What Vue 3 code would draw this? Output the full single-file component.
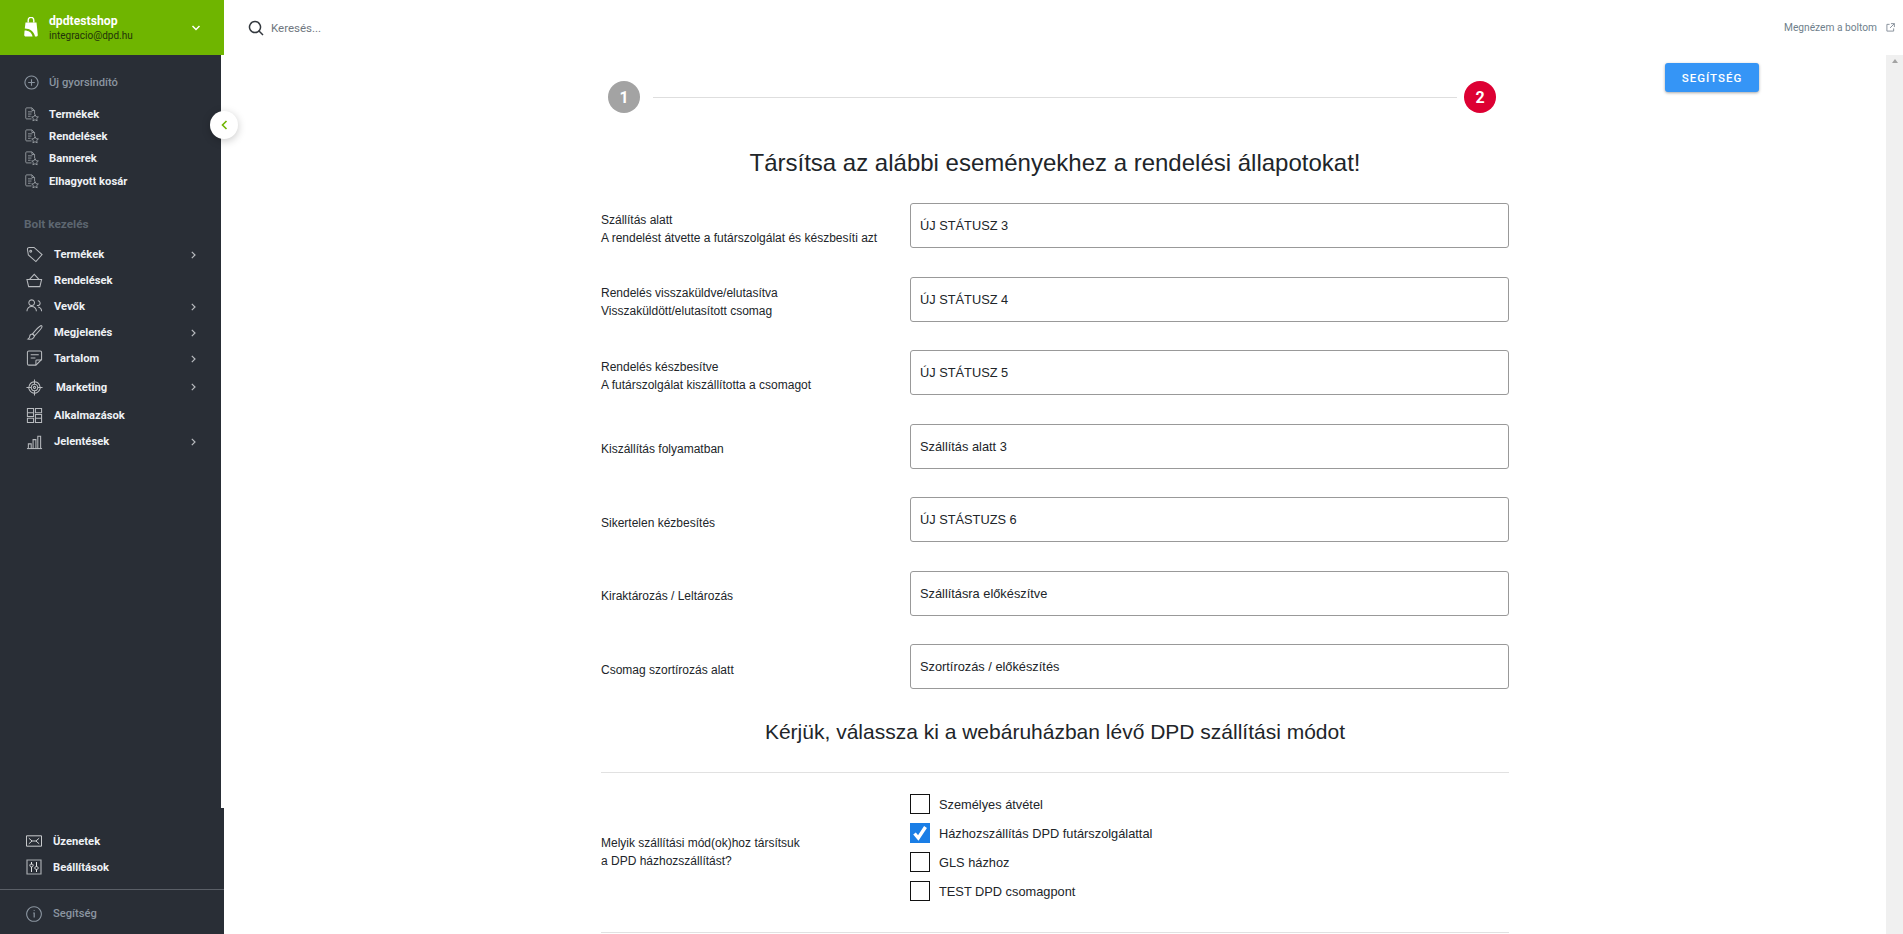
<script setup>
const fileStar = [
  'M8.500 13.500H3a1 1 0 0 1-1-1V2a1 1 0 0 1 1-1h6l3 3v4',
  'M9 1v3h3', 'M4.500 5.500h5M4.500 8h4M4.500 10.500h3',
  'M12.500 8.500l1.200 2.500 2.600.3-1.900 1.800.5 2.600-2.400-1.300-2.400 1.300.5-2.600-1.900-1.800 2.600-.3z'
]
const icons = {
  tag: ['M1.500 3.500a2 2 0 0 1 2-2h5l8.500 7.500-6.500 7.500-8-7z', 'M5 4.500a1 1 0 1 0 .01 0z'],
  basket: ['M1 8h15.500l-1.800 7.500H2.800z', 'M3.500 8L8.750 2.500 14 8'],
  users: ['M6 2a3 3 0 1 0 .01 0z', 'M1 14c0-3 2-5 5-5s5 2 5 5', 'M12.500 3a2.500 2.500 0 1 1-1 4.800', 'M13 9.500c2 .5 3.500 2 3.500 4.500'],
  brush: ['M16 1.500c-2 1-6 5-9 9l2 2c3-3 7-7 8-9.500 0-1-.5-1.500-1-1.500z', 'M7 10.500c-2 0-3 1-3 2.500 0 1-.5 2-2 3 2.500.5 5 0 6-1.500.7-1 1-1.500 1-2z'],
  note: ['M3 1h12a1.500 1.500 0 0 1 1.500 1.500V10l-6 6H3a1.500 1.500 0 0 1-1.500-1.500v-12A1.500 1.500 0 0 1 3 1z', 'M10.500 16v-4.500a1 1 0 0 1 1-1h5', 'M5 5h8.500M5 8.500h5'],
  target: ['M9 3a6 6 0 1 0 .01 0z', 'M9 5.500a3.500 3.500 0 1 0 .01 0z', 'M9 7.800a1.200 1.200 0 1 0 .01 0z', 'M9 .5v5M9 12.500v5M.5 9h5M12.500 9h5'],
  apps: ['M1.500 1.500h6.500v8.500H1.500zM1.500 12h6.500v4.500H1.500zM10 1.500h6.500V6H10zM10 8h6.500v8.500H10z', 'M1.500 6h6.500M10 12h6.500'],
  chart: ['M1 16.500h16', 'M2.500 16.500v-5h3v5M7.500 16.500V7h3v9.500M12.500 16.500V3.500h3v13']
}
const quick = ['Termékek', 'Rendelések', 'Bannerek', 'Elhagyott kosár']
const nav = [
  { label: 'Termékek', icon: 'tag', more: true },
  { label: 'Rendelések', icon: 'basket' },
  { label: 'Vevők', icon: 'users', more: true },
  { label: 'Megjelenés', icon: 'brush', more: true },
  { label: 'Tartalom', icon: 'note', more: true },
  { label: 'Marketing', icon: 'target', more: true, tall: true },
  { label: 'Alkalmazások', icon: 'apps' },
  { label: 'Jelentések', icon: 'chart', more: true }
]
const rows = [
  { lines: ['Szállítás alatt', 'A rendelést átvette a futárszolgálat és készbesíti azt'], value: 'ÚJ STÁTUSZ 3' },
  { lines: ['Rendelés visszaküldve/elutasítva', 'Visszaküldött/elutasított csomag'], value: 'ÚJ STÁTUSZ 4' },
  { lines: ['Rendelés készbesítve', 'A futárszolgálat kiszállította a csomagot'], value: 'ÚJ STÁTUSZ 5' },
  { lines: ['Kiszállítás folyamatban'], value: 'Szállítás alatt 3' },
  { lines: ['Sikertelen kézbesítés'], value: 'ÚJ STÁSTUZS 6' },
  { lines: ['Kiraktározás / Leltározás'], value: 'Szállításra előkészítve' },
  { lines: ['Csomag szortírozás alatt'], value: 'Szortírozás / előkészítés' }
]
const methods = [
  { label: 'Személyes átvétel', on: false },
  { label: 'Házhozszállítás DPD futárszolgálattal', on: true },
  { label: 'GLS házhoz', on: false },
  { label: 'TEST DPD csomagpont', on: false }
]
</script>

<template>
  <div class="app">
    <aside class="side">
      <header class="brand">
        <svg class="logo" viewBox="0 0 14 20" width="14" height="20">
          <path d="M4.200 5.500V3.200a2.800 2.800 0 0 1 5.600 0V5.500" fill="none" stroke="#fff" stroke-width="1.400" />
          <path d="M1.500 5.500H12.500L13.800 18C13.800 19 13 19.600 12 19.600H11C10.500 15 6 11.500 .8 11.500Z" fill="#fff" />
          <path d="M.6 13.500C4.500 13.500 8 15.500 8.500 19.600H2C.8 19.600 .2 18.800 .2 18Z" fill="#fff" />
        </svg>
        <div class="brand-text">
          <div class="shop">dpdtestshop</div>
          <div class="mail">integracio@dpd.hu</div>
        </div>
        <svg class="brand-chev" viewBox="0 0 10 6" width="10" height="6"><path d="M1.500 1L5 4.500 8.500 1" fill="none" stroke="#fff" stroke-width="1.500" /></svg>
      </header>

      <div class="side-body">
        <nav class="side-nav">
          <div class="new">
            <svg class="ico14" viewBox="0 0 15 15" width="15" height="15"><path d="M7.500 1a6.500 6.500 0 1 0 .01 0zM7.500 4.200v6.600M4.200 7.500h6.600" fill="none" stroke="#8b95a0" stroke-width="1.100" /></svg>
            <span>Új gyorsindító</span>
          </div>
          <ul class="quick">
            <li v-for="q in quick" :key="q">
              <svg class="ico14" viewBox="0 0 17 17" width="15" height="15">
                <path v-for="d in fileStar" :key="d" :d="d" fill="none" stroke="#9a9fa5" stroke-width="1" />
              </svg>
              <span>{{ q }}</span>
            </li>
          </ul>
          <div class="section">Bolt kezelés</div>
          <ul class="menu">
            <li v-for="n in nav" :key="n.label" :class="{ tall: n.tall }">
              <svg class="ico18" viewBox="0 0 18 18" width="17" height="17">
                <path v-for="d in icons[n.icon]" :key="d" :d="d" fill="none" stroke="#b8bbbf" stroke-width="1.100" />
              </svg>
              <span class="menu-label">{{ n.label }}</span>
              <svg v-if="n.more" class="more" viewBox="0 0 5 8" width="5" height="8"><path d="M.8.8L4 4 .8 7.200" fill="none" stroke="#b8bbbf" stroke-width="1.200" /></svg>
            </li>
          </ul>
        </nav>
        <footer class="side-foot">
          <ul class="menu foot-menu">
            <li>
              <svg class="ico18" viewBox="0 0 17 12" width="16" height="12"><path d="M.5.5h16v11H.5zM3 3l3.500 3L3 9M14 3l-3.500 3L14 9M6.500 6h4" fill="none" stroke="#d5d7d9" stroke-width="1" /></svg>
              <span class="menu-label">Üzenetek</span>
            </li>
            <li>
              <svg class="ico18" viewBox="0 0 16 16" width="16" height="16"><path d="M1 1h14v14H1z" fill="none" stroke="#a7abb0" stroke-width="1.200" /><path d="M5.500 3v2.500M5.500 8v5M10.500 3v4.500M10.500 10.500V13" fill="none" stroke="#e6e7e8" stroke-width="1" /><path d="M5.500 4.800a1.600 1.600 0 1 0 .01 0zM10.500 7.400a1.600 1.600 0 1 0 .01 0z" fill="none" stroke="#e6e7e8" stroke-width="1" /></svg>
              <span class="menu-label">Beállítások</span>
            </li>
          </ul>
          <div class="help">
            <svg class="ico18" viewBox="0 0 16 16" width="16" height="16"><path d="M8 .7a7.300 7.300 0 1 0 .01 0z" fill="none" stroke="#8b95a0" stroke-width="1.100" /><path d="M8.200 4v.8M7.200 7h1v4.500" fill="none" stroke="#8b95a0" stroke-width="1.200" /></svg>
            <span>Segítség</span>
          </div>
        </footer>
      </div>

      <button class="collapse" type="button" aria-label="Összecsukás">
        <svg viewBox="0 0 8 10" width="8" height="10"><path d="M6.500 1L2.500 5l4 4" fill="none" stroke="#6fb500" stroke-width="1.600" /></svg>
      </button>
    </aside>

    <div class="right">
      <div class="top">
        <svg class="search-ico" viewBox="0 0 16 16" width="16" height="16"><path d="M7 1.500a5.500 5.500 0 1 0 .01 0zM11 11l4 4" fill="none" stroke="#33383e" stroke-width="1.500" /></svg>
        <span class="search">Keresés...</span>
        <span class="view">Megnézem a boltom</span>
        <svg class="view-ico" viewBox="0 0 10 10" width="9" height="9"><path d="M4 1.500H1v7.500h7.500V6M5.500.7h3.800v3.800M9.300.7L4.500 5.500" fill="none" stroke="#7f8994" stroke-width="1" /></svg>
      </div>

      <div class="scroll-wrap">
        <main class="main">
          <section class="content">
            <div class="steps">
              <span class="dot grey">1</span>
              <span class="line"></span>
              <span class="dot red">2</span>
            </div>
            <h1>Társítsa az alábbi eseményekhez a rendelési állapotokat!</h1>
            <div v-for="r in rows" :key="r.value" class="row">
              <div class="lab"><div v-for="l in r.lines" :key="l">{{ l }}</div></div>
              <div class="field">{{ r.value }}</div>
            </div>
            <h2>Kérjük, válassza ki a webáruházban lévő DPD szállítási módot</h2>
            <div class="methods">
              <div class="lab">
                <div>Melyik szállítási mód(ok)hoz társítsuk</div>
                <div>a DPD házhozszállítást?</div>
              </div>
              <div class="checks">
                <div v-for="m in methods" :key="m.label" class="check">
                  <span class="box" :class="{ on: m.on }">
                    <svg v-if="m.on" viewBox="0 0 20 20" width="20" height="20"><path d="M4.500 10.500l3.800 4.500L15.500 4" fill="none" stroke="#fff" stroke-width="3.400" /></svg>
                  </span>
                  <span>{{ m.label }}</span>
                </div>
              </div>
            </div>
          </section>
          <div class="aside-col">
            <button class="help-btn" type="button">SEGÍTSÉG</button>
          </div>
        </main>
        <div class="scrollbar"><span class="arrow"></span></div>
      </div>
    </div>
  </div>
</template>

<style>
html, body { margin: 0; height: 100%; overflow: hidden; background: #fff; }
</style>

<style scoped>
* { box-sizing: border-box; }
ul { list-style: none; margin: 0; padding: 0; }
.app { display: flex; width: 1903px; height: 934px; overflow: hidden; font-family: Roboto, "Liberation Sans", sans-serif; }

.side { position: relative; flex: 0 0 224px; width: 224px; display: flex; flex-direction: column; }
.brand { flex: 0 0 55px; background: #6fb500; display: flex; align-items: center; padding: 0 0 0 24px; }
.logo { flex: none; margin-top: -1px; }
.brand-text { margin-left: 11px; flex: 1; padding-top: 2px; }
.shop { font-size: 12.200px; font-weight: 700; color: #fff; line-height: 15px; margin-top: -2px; }
.mail { font-size: 10px; color: #22330a; line-height: 13px; }
.brand-chev { margin-right: 23px; }

.side-body { flex: 1; min-height: 0; display: flex; flex-direction: column; }
.side-nav { flex: none; width: 221px; height: 753px; background: #292e36; padding-top: 18px; }
.side-foot { flex: 1; min-height: 0; background: #292e36; padding-top: 20px; }

.new { display: flex; align-items: center; height: 18px; padding-left: 24px; font-size: 11.200px; font-weight: 500; color: #8b95a0; }
.ico14 { flex: none; margin-right: 10px; }
.quick { margin-top: 12px; }
.quick li { display: flex; align-items: center; height: 22.400px; padding-left: 24px; font-size: 11.200px; font-weight: 700; color: #eef1f5; }

.section { margin-top: 21px; padding-left: 24px; height: 20px; line-height: 20px; font-size: 11.800px; font-weight: 700; color: #5d6670; }
.menu { margin-top: 8px; }
.menu li { display: flex; align-items: center; height: 26px; padding-left: 26px; font-size: 11.200px; font-weight: 700; color: #eef1f5; }
.menu li.tall { height: 31px; }
.menu li.tall .menu-label { margin-left: 2px; }
.ico18 { flex: none; margin-right: 11px; }
.menu-label { flex: 1; }
.more { margin-right: 25px; }
.foot-menu { margin-top: 0; }

.help { margin-top: 9px; border-top: 1px solid #5a5f67; height: 45px; padding-top: 3px; display: flex; align-items: center; padding-left: 26px; font-size: 11.200px; font-weight: 500; color: #8b95a0; }

.collapse { position: absolute; left: 210px; top: 111px; width: 28px; height: 28px; padding: 0; border: 0; border-radius: 50%; background: #fff; box-shadow: 0 2px 8px rgba(0, 0, 0, .22); display: flex; align-items: center; justify-content: center; }

.right { flex: 1; min-width: 0; display: flex; flex-direction: column; }
.top { flex: 0 0 55px; display: flex; align-items: center; padding: 0 8px 0 24px; }
.search-ico { flex: none; }
.search { flex: 1; margin-left: 7px; font-size: 11.500px; color: #6f7780; }
.view { font-size: 10.200px; color: #6f7f8c; }
.view-ico { margin-left: 9px; }

.scroll-wrap { flex: 1; display: flex; min-height: 0; }
.main { flex: 1; display: grid; grid-template-columns: 1fr 908px 1fr; overflow: hidden; }
.content { grid-column: 2; font-family: "Liberation Sans", Arial, sans-serif; color: #212529; }
.aside-col { grid-column: 3; padding: 8px 0 0 156px; }
.help-btn { display: block; width: 94px; height: 29px; padding: 0; border: 0; border-radius: 3px; background: #3595f6; color: #fff; font-family: Roboto, sans-serif; font-size: 11.500px; font-weight: 500; letter-spacing: 1px; box-shadow: 0 1px 3px rgba(0, 0, 0, .35); }

.steps { display: flex; align-items: center; height: 32px; margin-top: 26px; padding: 0 13px 0 7px; }
.dot { flex: none; width: 32px; height: 32px; border-radius: 50%; color: #fff; font-family: Roboto, sans-serif; font-size: 16px; font-weight: 700; display: flex; align-items: center; justify-content: center; }
.grey { background: #a3a3a3; }
.red { background: #dd0033; }
.line { flex: 1; height: 1px; background: #dedede; margin: 0 7px 0 13px; }

h1 { margin: 35px 0 0; height: 30px; line-height: 30px; text-align: center; font-size: 24px; font-weight: 400; color: #212529; }
.row { display: flex; align-items: center; height: 45px; margin-bottom: 28.500px; }
h1 + .row { margin-top: 25px; }
.lab { flex: 0 0 309px; font-size: 12px; line-height: 18px; color: #212529; }
.row .lab { padding-top: 6px; }
.field { flex: 1; height: 45px; display: flex; align-items: center; padding-left: 9px; border: 1px solid #999; border-radius: 3px; font-size: 12.800px; color: #212529; }

h2 { margin: -1px 0 0; height: 30px; line-height: 30px; text-align: center; font-size: 21px; font-weight: 400; color: #212529; }
.methods { margin-top: 25px; height: 161px; border-top: 1px solid #e1e1e1; border-bottom: 1px solid #e1e1e1; display: flex; align-items: center; }
.checks { display: flex; flex-direction: column; gap: 9px; margin-top: -9px; }
.check { display: flex; align-items: center; height: 20px; gap: 9px; font-size: 12.800px; color: #212529; }
.box { flex: none; width: 20px; height: 20px; border: 1px solid #111; background: #fff; }
.box.on { border: 0; background: #1a7ee6; }
.box svg { display: block; }

.scrollbar { flex: 0 0 17px; background: #f0f0f0; display: flex; justify-content: center; padding-top: 4px; }
.arrow { width: 0; height: 0; border-left: 3.500px solid transparent; border-right: 3.500px solid transparent; border-bottom: 4px solid #a3a3a3; }
</style>
